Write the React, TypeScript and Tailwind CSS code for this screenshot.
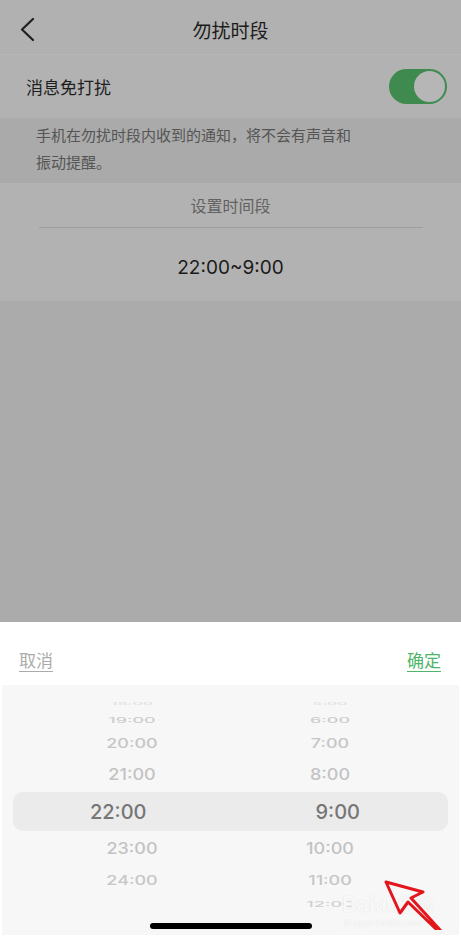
import React from "react"

const cjk = { fontFamily: '"Noto Sans CJK SC", "Noto Sans", sans-serif' }
const num = { fontFamily: 'Inter, "Noto Sans", sans-serif' }

type Row = {
  left: string
  right: string
  h: string
  cls: string
  selected?: boolean
}

const rows: Row[] = [
  { left: "18:00", right: "5:00", h: "h-[13px]", cls: "text-[16px] scale-y-[0.2] text-[#e0e0e0]" },
  { left: "19:00", right: "6:00", h: "h-[20px]", cls: "text-[18px] scale-y-[0.45] text-[#cdcdcd]" },
  { left: "20:00", right: "7:00", h: "h-[27px]", cls: "text-[18px] scale-y-[0.7] text-[#c6c6c6]" },
  { left: "21:00", right: "8:00", h: "h-[35px]", cls: "text-[18px] scale-y-[0.9] text-[#c3c3c3]" },
  { left: "22:00", right: "9:00", h: "h-[39px]", cls: "text-[20px] text-[#767676]", selected: true },
  { left: "23:00", right: "10:00", h: "h-[35px]", cls: "text-[18px] scale-y-[0.9] text-[#c3c3c3]" },
  { left: "24:00", right: "11:00", h: "h-[29px]", cls: "text-[18px] scale-y-[0.7] text-[#c6c6c6]" },
  { left: "", right: "12:00", h: "h-[18px]", cls: "text-[18px] scale-y-[0.45] text-[#d0d0d0]" },
]

function Toggle() {
  return (
    <div className="w-[58px] h-[35px] rounded-full bg-[#3e8a4f] flex items-center justify-end pr-[2px]">
      <div className="w-[31px] h-[31px] rounded-full bg-[#b6b6b6]" />
    </div>
  )
}

export default function App() {
  return (
    <div className="w-[461px] h-[939px] bg-white flex flex-col overflow-hidden" style={cjk}>
      {/* dimmed page behind the sheet */}
      <div className="h-[622px] bg-[#ababab] flex flex-col">
        <div className="h-[55px] bg-[#b1b1b1] border-b border-[#b6b6b6] relative flex items-center justify-center">
          <svg className="absolute left-[18px] top-[17px]" width="18" height="26" viewBox="0 0 18 26">
            <path d="M15 2 L4 12.5 L15 23" fill="none" stroke="#1f1f1f" strokeWidth="2.2" strokeLinecap="round" strokeLinejoin="round" />
          </svg>
          <span className="text-[19px] text-[#1c1c1c] mt-[6px]">勿扰时段</span>
        </div>
        <div className="h-[63px] bg-[#b2b2b2] flex items-center justify-between pl-[26px] pr-[14px]">
          <span className="text-[17px] text-[#1e1e1e]">消息免打扰</span>
          <Toggle />
        </div>
        <div className="h-[65px] bg-[#aaaaaa] pl-[36px] pr-[20px] pt-[3px] text-[15px] leading-[27px] text-[#555555]">
          手机在勿扰时段内收到的通知，将不会有声音和
          <br />
          振动提醒。
        </div>
        <div className="h-[118px] bg-[#b2b2b2] flex flex-col items-center">
          <div className="h-[44px] flex items-center text-[16px] text-[#626262]">设置时间段</div>
          <div className="w-[384px] h-px bg-[#9d9d9d]" />
          <div className="h-[73px] flex items-center text-[19px] text-[#1a1a1a] pt-[8px]" style={num}>
            22:00~9:00
          </div>
        </div>
      </div>

      {/* bottom sheet */}
      <div className="h-[63px] bg-white flex items-center justify-between pl-[19px] pr-[20px] pt-[12px]">
        <span className="text-[17px] text-[#ababab] underline underline-offset-[4px]">取消</span>
        <span className="text-[17px] text-[#4fb56a] underline underline-offset-[4px]">确定</span>
      </div>
      <div className="relative flex-1 bg-[#f7f7f7] mb-[4px] mx-[2px] flex flex-col pt-[12px]" style={num}>
        {rows.map((r, i) => (
          <div
            key={i}
            className={`${r.h} flex items-center font-medium ${r.selected ? "bg-[#ebebeb] rounded-[10px] mx-[11px]" : ""}`}
          >
            <div className={`${r.selected ? "w-[226px] pr-[14px]" : "w-[248px] pl-[12px]"} flex justify-center`}>
              <span className={`${r.cls} inline-block leading-none`}>{r.left}</span>
            </div>
            <div className={`${r.selected ? "w-[212px] pr-[10px]" : "w-[160px]"} flex justify-center`}>
              <span className={`${r.cls} inline-block leading-none`}>{r.right}</span>
            </div>
          </div>
        ))}
        <div className="flex-1 flex items-end justify-center pb-[6px]">
          <div className="w-[162px] h-[6px] rounded-full bg-black" />
        </div>

        {/* watermark + annotation arrow */}
        <div className="absolute left-[340px] top-[208px] text-[22px] leading-none font-bold text-white/80 [text-shadow:0_0_1px_#d8d8d8]">
          Bai<span className="text-[18px]">du</span>
          <span className="text-[18px]" style={cjk}>经验</span>
        </div>
        <div className="absolute left-[342px] top-[233px] text-[9px] leading-none text-white [text-shadow:0_0_1px_#cfcfcf]">
          jingyan.baidu.com
        </div>
        <svg className="absolute left-[370px] top-[185px]" width="80" height="60" viewBox="370 870 80 60">
          <path
            d="M384 882 L421 892 L409 898 L439 931 M384 882 L398 913 L406 902 L434 929"
            fill="none"
            stroke="#e3161d"
            strokeWidth="3"
            strokeLinecap="round"
            strokeLinejoin="round"
          />
        </svg>
      </div>
    </div>
  )
}
